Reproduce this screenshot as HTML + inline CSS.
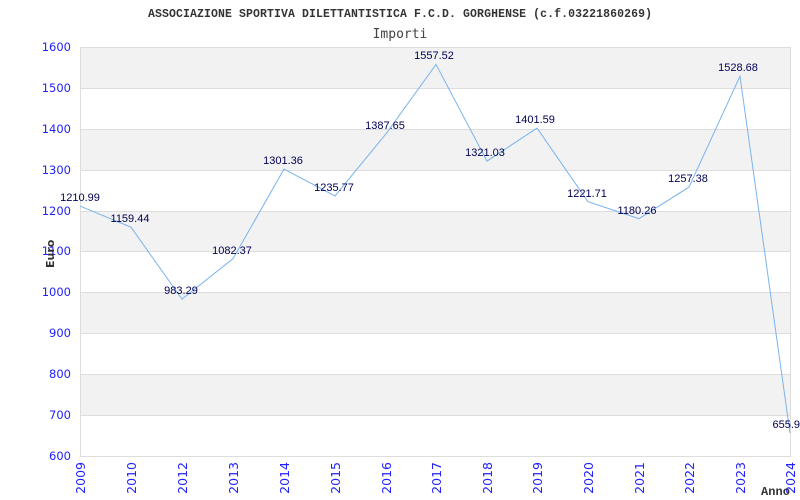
<!DOCTYPE html>
<html><head><meta charset="utf-8"><style>
body{margin:0;background:#fff;width:800px;height:500px;overflow:hidden}
svg{display:block}
</style></head><body>
<svg width="800" height="500" xmlns="http://www.w3.org/2000/svg">
<rect x="0" y="0" width="800" height="500" fill="#fff"/>
<g fill="#f2f2f2">
<rect x="80.5" y="47" width="710" height="41"/>
<rect x="80.5" y="129" width="710" height="41"/>
<rect x="80.5" y="211" width="710" height="40"/>
<rect x="80.5" y="292" width="710" height="41"/>
<rect x="80.5" y="374" width="710" height="41"/>
</g>
<g stroke="#dddddd" stroke-width="1">
<line x1="80" y1="47.5" x2="790" y2="47.5"/>
<line x1="80" y1="88.5" x2="790" y2="88.5"/>
<line x1="80" y1="129.5" x2="790" y2="129.5"/>
<line x1="80" y1="170.5" x2="790" y2="170.5"/>
<line x1="80" y1="211.5" x2="790" y2="211.5"/>
<line x1="80" y1="251.5" x2="790" y2="251.5"/>
<line x1="80" y1="292.5" x2="790" y2="292.5"/>
<line x1="80" y1="333.5" x2="790" y2="333.5"/>
<line x1="80" y1="374.5" x2="790" y2="374.5"/>
<line x1="80" y1="415.5" x2="790" y2="415.5"/>
<line x1="80" y1="456.5" x2="790" y2="456.5"/>
<line x1="80.5" y1="47" x2="80.5" y2="457"/>
<line x1="790.5" y1="47" x2="790.5" y2="457"/>
</g>
<g font-family="DejaVu Sans, sans-serif" font-size="11.5" fill="#2222ff" text-anchor="end">
<text x="71" y="51">1600</text><text x="71" y="92">1500</text><text x="71" y="133">1400</text>
<text x="71" y="174">1300</text><text x="71" y="215">1200</text><text x="71" y="255">1100</text>
<text x="71" y="296">1000</text><text x="71" y="337">900</text><text x="71" y="378">800</text>
<text x="71" y="419">700</text><text x="71" y="460">600</text>
</g>
<g font-family="DejaVu Sans, sans-serif" font-size="12.5" fill="#2222ff" text-anchor="end">
<text transform="translate(85,462) rotate(-90)">2009</text>
<text transform="translate(136,462) rotate(-90)">2010</text>
<text transform="translate(187,462) rotate(-90)">2012</text>
<text transform="translate(238,462) rotate(-90)">2013</text>
<text transform="translate(289,462) rotate(-90)">2014</text>
<text transform="translate(340,462) rotate(-90)">2015</text>
<text transform="translate(391,462) rotate(-90)">2016</text>
<text transform="translate(441,462) rotate(-90)">2017</text>
<text transform="translate(492,462) rotate(-90)">2018</text>
<text transform="translate(542,462) rotate(-90)">2019</text>
<text transform="translate(593,462) rotate(-90)">2020</text>
<text transform="translate(644,462) rotate(-90)">2021</text>
<text transform="translate(694,462) rotate(-90)">2022</text>
<text transform="translate(745,462) rotate(-90)">2023</text>
<text transform="translate(795,462) rotate(-90)">2024</text>
</g>
<polyline fill="none" stroke="#7ab4ee" stroke-width="1" points="80,206.1 131,227.2 182,299.2 233,258.7 284,169.1 335,196 386,133.8 436,64.4 487,161.1 537,128.1 588,201.7 639,218.7 689,187.1 740,76.2 790,433.1"/>
<g font-family="Liberation Sans, sans-serif" font-size="11" fill="#000055" text-anchor="middle">
<text x="80" y="201">1210.99</text>
<text x="130" y="222">1159.44</text>
<text x="181" y="294">983.29</text>
<text x="232" y="254">1082.37</text>
<text x="283" y="164">1301.36</text>
<text x="334" y="191">1235.77</text>
<text x="385" y="129">1387.65</text>
<text x="434" y="59">1557.52</text>
<text x="485" y="156">1321.03</text>
<text x="535" y="123">1401.59</text>
<text x="587" y="197">1221.71</text>
<text x="637" y="214">1180.26</text>
<text x="688" y="182">1257.38</text>
<text x="738" y="71">1528.68</text>
<text x="800" y="428" text-anchor="end">655.9</text>
</g>
<text x="400" y="17" text-anchor="middle" font-family="Liberation Mono, monospace" font-weight="bold" font-size="11.5" fill="#333" textLength="504">ASSOCIAZIONE SPORTIVA DILETTANTISTICA F.C.D. GORGHENSE (c.f.03221860269)</text>
<text x="400" y="38" text-anchor="middle" font-family="DejaVu Sans Mono, monospace" font-size="13" fill="#444">Importi</text>
<text transform="translate(54,268) rotate(-90)" font-family="DejaVu Sans, sans-serif" font-weight="bold" font-size="11" fill="#333">Euro</text>
<text x="761" y="495" font-family="Liberation Mono, monospace" font-weight="bold" font-size="12" fill="#333" textLength="29">Anno</text>
</svg>
</body></html>
